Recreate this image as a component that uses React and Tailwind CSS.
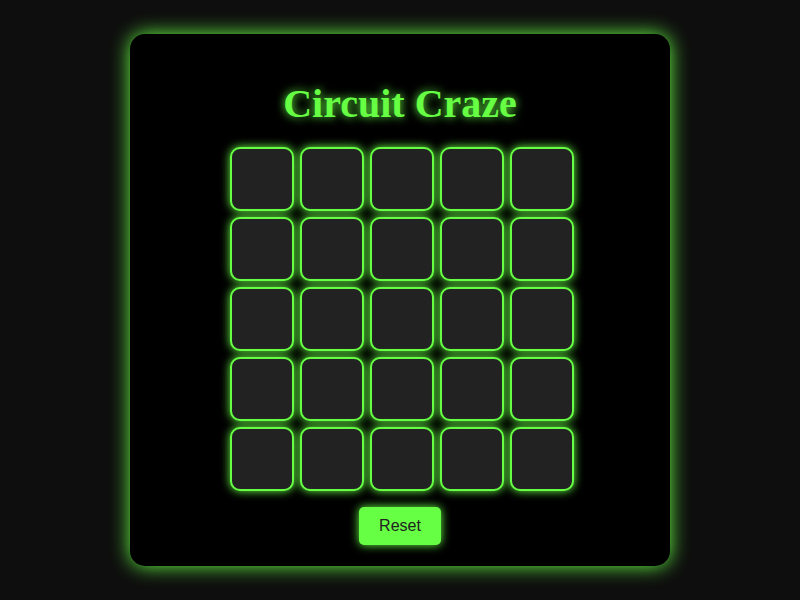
import React, { useState } from 'react';

const SIZE = 5;

function App() {
  const [cells, setCells] = useState(() => Array(SIZE * SIZE).fill(false));

  const toggle = (i) => {
    setCells((prev) => prev.map((v, idx) => (idx === i ? !v : v)));
  };

  const reset = () => setCells(Array(SIZE * SIZE).fill(false));

  return (
    <div className="min-h-screen w-full bg-[#0e0e0e] flex items-center justify-center">
      <div className="w-[540px] h-[532px] bg-black rounded-[15px] shadow-[0_0_20px_#66ff44] flex flex-col items-center pt-[40px]">
        <h1
          className="text-[40px] leading-[60px] font-bold text-[#66ff44] mb-[13px] [text-shadow:0_0_10px_#66ff44]"
          style={{ fontFamily: '"Liberation Serif", "Times New Roman", serif' }}
        >
          Circuit Craze
        </h1>
        <div className="grid grid-cols-5 gap-[6px] pl-[4px]">
          {cells.map((on, i) => (
            <button
              key={i}
              onClick={() => toggle(i)}
              className={`w-[64px] h-[64px] rounded-[10px] border-2 border-[#66ff44] shadow-[0_0_10px_#66ff44] ${
                on ? 'bg-[#66ff44]' : 'bg-[#222222]'
              }`}
            />
          ))}
        </div>
        <button
          onClick={reset}
          className="mt-[16px] w-[82px] h-[38px] rounded-[5px] bg-[#66ff44] text-[#222222] text-[16px] shadow-[0_0_10px_#66ff44]"
          style={{ fontFamily: '"Liberation Sans", Arial, sans-serif' }}
        >
          Reset
        </button>
      </div>
    </div>
  );
}

export default App;
